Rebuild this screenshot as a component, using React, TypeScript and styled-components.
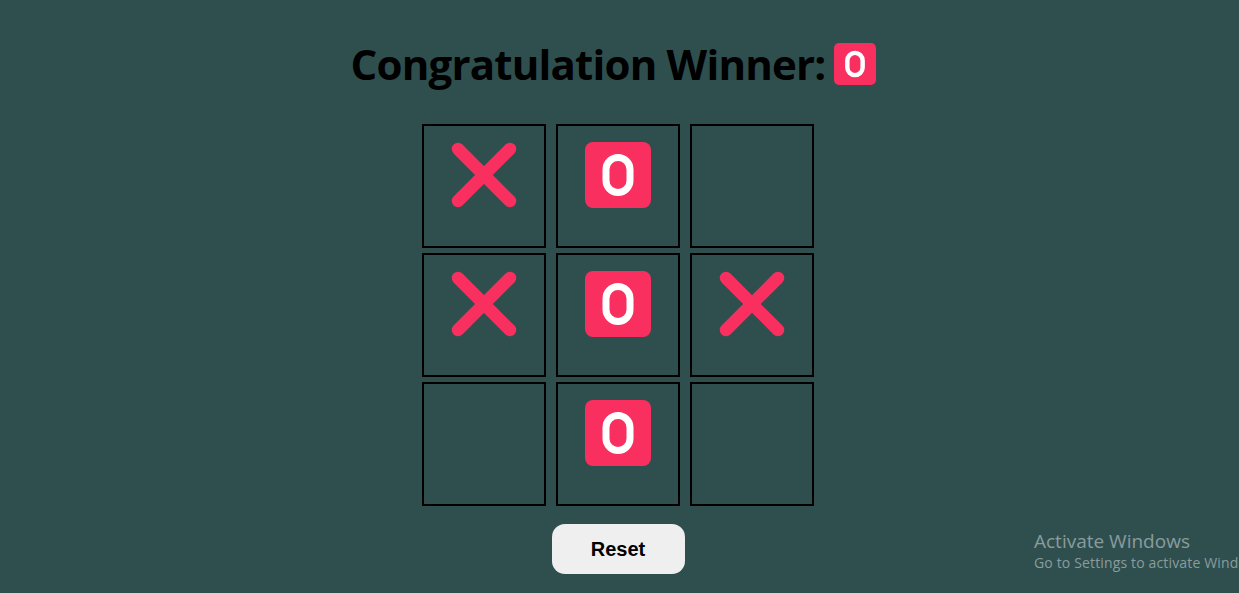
import React from "react";
import styled, { createGlobalStyle } from "styled-components";

const GlobalStyle = createGlobalStyle`
  html, body {
    margin: 0;
    padding: 0;
    background: #2f4f4f;
    overflow: hidden;
  }
  body {
    font-family: "Open Sans", "Noto Sans", sans-serif;
  }
`;

const Page = styled.div`
  min-height: 593px;
  box-sizing: border-box;
  padding-right: 3px;
  display: flex;
  flex-direction: column;
  align-items: center;
  background: #2f4f4f;
  position: relative;
`;

const Header = styled.div`
  margin-top: 43px;
  margin-right: 10px;
  height: 42px;
  display: flex;
  align-items: center;
  gap: 8px;
`;

const Title = styled.h1`
  margin: 0;
  font-family: "Open Sans", "Noto Sans", sans-serif;
  font-weight: 700;
  font-size: 42px;
  letter-spacing: -0.8px;
  color: #000;
  line-height: 42px;
`;

const Board = styled.div`
  margin-top: 39px;
  display: grid;
  grid-template-columns: repeat(3, 124px);
  grid-auto-rows: 124px;
  column-gap: 10px;
  row-gap: 5px;
`;

const Cell = styled.div`
  box-sizing: border-box;
  border: 2px solid #000;
  display: flex;
  justify-content: center;
  align-items: flex-start;
  padding-top: 16px;
`;

const ResetButton = styled.button`
  margin-top: 18px;
  width: 133px;
  height: 50px;
  border: none;
  border-radius: 13px;
  background: #efefef;
  font-family: "Liberation Sans", Arial, sans-serif;
  font-weight: 700;
  font-size: 20px;
  color: #000;
  cursor: pointer;
`;

const Watermark = styled.div`
  position: absolute;
  left: 1034px;
  top: 529px;
  color: #8a9c9c;
  font-family: "Open Sans", "Noto Sans", sans-serif;
  white-space: nowrap;
`;

const WmTitle = styled.div`
  font-size: 19px;
  line-height: 24px;
`;

const WmSub = styled.div`
  font-size: 14px;
  letter-spacing: 0.15px;
  line-height: 20px;
`;

type Mark = "X" | "O" | null;

const XIcon: React.FC<{ size: number }> = ({ size }) => (
  <svg width={size} height={size} viewBox="0 0 66 66" aria-hidden="true">
    <g stroke="#f92f60" strokeWidth="12.5" strokeLinecap="round">
      <line x1="7" y1="7" x2="59" y2="59" />
      <line x1="59" y1="7" x2="7" y2="59" />
    </g>
  </svg>
);

const OIcon: React.FC<{ size: number }> = ({ size }) => (
  <svg width={size} height={size} viewBox="0 0 66 66" aria-hidden="true">
    <rect x="0" y="0" width="66" height="66" rx="8" fill="#f92f60" />
    <rect
      x="21"
      y="15.5"
      width="24"
      height="35"
      rx="12"
      fill="none"
      stroke="#fff"
      strokeWidth="7"
    />
  </svg>
);

const board: Mark[] = ["X", "O", null, "X", "O", "X", null, "O", null];

export default function App() {
  return (
    <>
      <GlobalStyle />
      <Page>
        <Header>
          <Title>Congratulation Winner:</Title>
          <OIcon size={42} />
        </Header>
        <Board>
          {board.map((m, i) => (
            <Cell key={i}>
              {m === "X" && <XIcon size={66} />}
              {m === "O" && <OIcon size={66} />}
            </Cell>
          ))}
        </Board>
        <ResetButton>Reset</ResetButton>
        <Watermark>
          <WmTitle>Activate Windows</WmTitle>
          <WmSub>Go to Settings to activate Windows.</WmSub>
        </Watermark>
      </Page>
    </>
  );
}
